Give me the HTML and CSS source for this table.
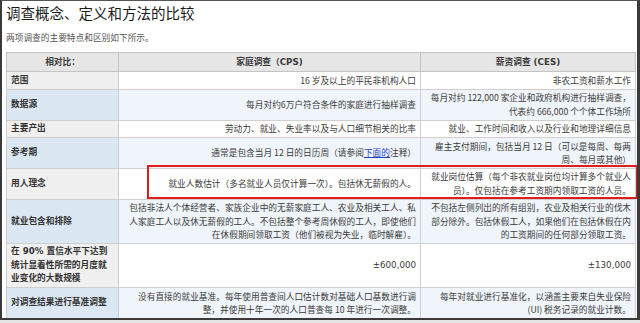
FILE: index.html
```html
<!DOCTYPE html>
<html lang="zh-CN">
<head>
<meta charset="utf-8">
<title>调查概念、定义和方法的比较</title>
<link rel="stylesheet" href="styles.css">
</head>
<body>
<div class="frame">
  <h1 class="title">调查概念、定义和方法的比较</h1>
  <p class="intro">两项调查的主要特点和区别如下所示。</p>
  <div class="table-wrap">
    <table class="cmp">
      <colgroup>
        <col class="c1"><col class="c2"><col class="c3">
      </colgroup>
      <thead>
        <tr><th>相对比：</th><th>家庭调查（CPS)</th><th>薪资调查 (CES)</th></tr>
      </thead>
      <tbody>
        <tr class="odd">
          <th>范围</th>
          <td>16 岁及以上的平民非机构人口</td>
          <td>非农工资和薪水工作</td>
        </tr>
        <tr class="even">
          <th>数据源</th>
          <td>每月对约6万户符合条件的家庭进行抽样调查</td>
          <td>每月对约 122,000 家企业和政府机构进行抽样调查，<br>代表约 666,000 个个体工作场所</td>
        </tr>
        <tr class="odd">
          <th>主要产出</th>
          <td>劳动力、就业、失业率以及与人口细节相关的比率</td>
          <td>就业、工作时间和收入以及行业和地理详细信息</td>
        </tr>
        <tr class="even">
          <th>参考期</th>
          <td>通常是包含当月 12 日的日历周（请参阅<a href="#notes">下面的</a>注释）</td>
          <td>雇主支付期间，包括当月 12 日（可以是每周、每两<br>周、每月或其他）</td>
        </tr>
        <tr class="odd">
          <th>用人理念</th>
          <td>就业人数估计（多名就业人员仅计算一次）。包括休无薪假的人。</td>
          <td>就业岗位估算（每个非农就业岗位均计算多个就业人<br>员）。仅包括在参考工资期内领取工资的人员。</td>
        </tr>
        <tr class="even">
          <th>就业包含和排除</th>
          <td>包括非法人个体经营者、家族企业中的无薪家庭工人、农业及相关工人、私<br>人家庭工人以及休无薪假的工人。不包括整个参考周休假的工人，即使他们<br>在休假期间领取工资（他们被视为失业，临时解雇）。</td>
          <td>不包括左侧列出的所有组别，农业及相关行业的伐木<br>部分除外。包括休假工人，如果他们在包括休假在内<br>的工资期间的任何部分领取工资。</td>
        </tr>
        <tr class="odd">
          <th>在 90% 置信水平下达到<br>统计显着性所需的月度就<br>业变化的大数规模</th>
          <td class="num">±600,000</td>
          <td class="num">±130,000</td>
        </tr>
        <tr class="even">
          <th>对调查结果进行基准调整</th>
          <td>没有直接的就业基准。每年使用普查间人口估计数对基础人口基数进行调<br>整，并使用十年一次的人口普查每 10 年进行一次调整。</td>
          <td>每年对就业进行基准化，以涵盖主要来自失业保险<br>(UI) 税务记录的就业计数。</td>
        </tr>
      </tbody>
    </table>
    <div class="highlight"></div>
  </div>
</div>
</body>
</html>
```
FILE: styles.css
```css
html, body {
  margin: 0;
  padding: 0;
}
body {
  background: #e4e4e4;
  width: 640px;
  height: 323px;
  overflow: hidden;
  font-family: "DejaVu Sans", "Noto Sans CJK SC", sans-serif;
}
.frame {
  box-sizing: border-box;
  width: 640px;
  height: 320px;
  overflow: hidden;
  background: #ffffff;
  border-left: 2px solid #3a3a3a;
  border-top: 1px solid #555555;
  border-right: 3px solid #3a3a3a;
  border-bottom: 2px solid #3a3a3a;
  padding: 2px 0 0 4px;
}
.title {
  margin: 0;
  font-family: "Noto Sans CJK SC", sans-serif;
  font-weight: 400;
  font-size: 14.5px;
  line-height: 20px;
  color: #1a1a1a;
}
.intro {
  margin: 9px 0 8px;
  font-family: "Noto Sans CJK SC", sans-serif;
  font-size: 8.7px;
  line-height: 12px;
  color: #555555;
}
.table-wrap {
  position: relative;
  width: 629px;
}
.cmp {
  width: 629px;
  border-collapse: collapse;
  table-layout: fixed;
  font-size: 8.7px;
  line-height: 13.4px;
  color: #3a3a3a;
}
.c1 { width: 112px; }
.c2 { width: 302px; }
.c3 { width: 215px; }
.cmp th,
.cmp td {
  border: 1px solid #cfcfcf;
  padding: 1.5px 4px;
  vertical-align: middle;
  white-space: nowrap;
}
.cmp td {
  text-align: right;
  font-family: "Noto Sans CJK SC", sans-serif;
}
.cmp td.num {
  font-family: "DejaVu Sans", sans-serif;
}
.cmp td + td {
  border-left-color: #b4b4b4;
}
.cmp thead th {
  background: #e6e6e6;
  text-align: center;
  font-weight: 700;
  padding: 2.5px 4px;
  border-color: #c4c4c4;
}
.cmp tbody th {
  text-align: left;
  font-weight: 700;
  color: #333333;
}
.cmp tr.odd th { background: #f0f0f0; }
.cmp tr.odd td { background: #ffffff; }
.cmp tr.even th { background: #dce7f4; }
.cmp tr.even td { background: #f0f5fb; }
.cmp a {
  color: #1a3fc4;
  text-decoration: underline;
}
.highlight {
  position: absolute;
  left: 141px;
  top: 113px;
  width: 491px;
  height: 34px;
  box-sizing: border-box;
  border: 2px solid #e21b1b;
  pointer-events: none;
}
```
